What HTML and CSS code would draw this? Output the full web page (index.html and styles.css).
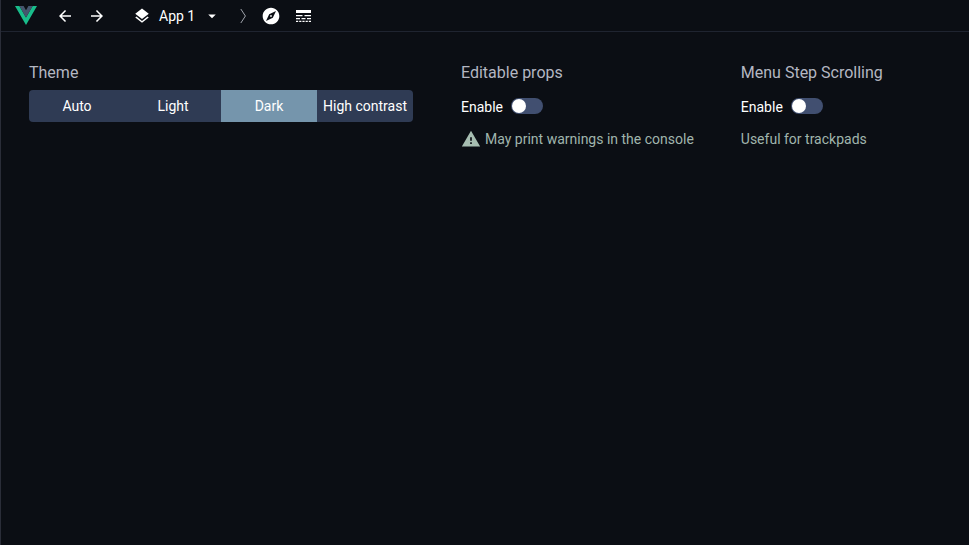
FILE: index.html
```html
<!DOCTYPE html>
<html lang="en">
<head>
<meta charset="utf-8">
<title>Vue Devtools settings</title>
<link rel="stylesheet" href="styles.css">
</head>
<body>
<div class="app">
  <header class="toolbar">
    <svg class="logo" viewBox="0 0 22 19" width="22" height="19"><path class="logo-outer" d="M0 0h4.4L11 11.4 17.6 0H22L11 19z"/><path class="logo-inner" d="M4.4 0h4.2L11 4.2 13.4 0h4.2L11 11.4z"/></svg>
    <div class="nav">
      <button class="icon-btn"><svg class="icon" viewBox="0 0 24 24"><path d="M20 11H7.83l5.59-5.59L12 4l-8 8 8 8 1.41-1.41L7.83 13H20z"/></svg></button>
      <button class="icon-btn"><svg class="icon" viewBox="0 0 24 24"><path d="M12 4l-1.41 1.41L16.17 11H4v2h12.17l-5.58 5.59L12 20l8-8z"/></svg></button>
    </div>
    <div class="app-select">
      <svg class="icon icon-layers" viewBox="0 0 24 24"><path d="M11.99 18.54l-7.37-5.73L3 14.07l9 7 9-7-1.63-1.27zM12 16l7.36-5.73L21 9l-9-7-9 7 1.63 1.27z"/></svg>
      <span class="app-name">App 1</span>
      <svg class="icon icon-drop" viewBox="0 0 24 24"><path d="M7 10l5 5 5-5z"/></svg>
    </div>
    <svg class="crumb" viewBox="0 0 8 16" width="8" height="16"><path d="M1.8 1l4.6 7-4.6 7" fill="none" stroke="#a0a4ac" stroke-width="1"/></svg>
    <button class="icon-btn tool"><svg class="icon icon-lg" viewBox="0 0 24 24"><path d="M12 10.9c-.61 0-1.1.49-1.1 1.1s.49 1.1 1.1 1.1 1.1-.49 1.1-1.1-.49-1.1-1.1-1.1zM12 2C6.48 2 2 6.48 2 12s4.48 10 10 10 10-4.48 10-10S17.52 2 12 2zm2.19 12.19L6 18l3.81-8.19L18 6l-3.81 8.19z"/></svg></button>
    <button class="icon-btn tool"><svg class="icon icon-table" viewBox="0 0 15 12"><path d="M0 0h15v3H0zM0 5h6.5v1.2H0zM8.5 5H15v1.2H8.5zM0 8h4v1.2H0zM5.5 8h4v1.2h-4zM11 8h4v1.2h-4zM0 10.8h2.2V12H0zM3.2 10.8h2.2V12H3.2zM6.4 10.8h2.2V12H6.4zM9.6 10.8h2.2V12H9.6zM12.8 10.8H15V12h-2.2z"/></svg></button>
  </header>
  <main class="settings">
    <section class="group">
      <h2 class="label">Theme</h2>
      <div class="segments">
        <button class="segment">Auto</button>
        <button class="segment">Light</button>
        <button class="segment active">Dark</button>
        <button class="segment">High contrast</button>
      </div>
    </section>
    <section class="group">
      <h2 class="label">Editable props</h2>
      <div class="toggle-row"><span class="toggle-text">Enable</span><span class="toggle"><span class="knob"></span></span></div>
      <p class="note note-warn"><svg class="warn" viewBox="0 0 24 24"><path d="M1 21h22L12 2 1 21zm12-3h-2v-2h2v2zm0-4h-2v-4h2v4z"/></svg>May print warnings in the console</p>
    </section>
    <section class="group">
      <h2 class="label">Menu Step Scrolling</h2>
      <div class="toggle-row"><span class="toggle-text">Enable</span><span class="toggle"><span class="knob"></span></span></div>
      <p class="note">Useful for trackpads</p>
    </section>
  </main>
</div>
</body>
</html>
```
FILE: styles.css
```css
* { box-sizing: border-box; }
html, body { margin: 0; height: 100%; }
body {
  background: #0b0e14;
  color: #fff;
  font-family: Roboto, "Liberation Sans", sans-serif;
  font-size: 14px;
}
.app {
  height: 545px;
  border-left: 1px solid #2a2d38;
  overflow: hidden;
}
.toolbar {
  height: 32px;
  display: flex;
  align-items: center;
  padding-left: 14px;
  border-bottom: 1px solid #1f2430;
}
.logo { flex: none; }
.logo-outer { fill: #19bd8b; }
.logo-inner { fill: #45566e; }
.nav { display: flex; margin-left: 12px; }
.icon-btn {
  width: 32px;
  height: 31px;
  padding: 0;
  border: 0;
  background: none;
  display: flex;
  align-items: center;
  justify-content: center;
}
.icon { width: 18px; height: 18px; fill: #fff; display: block; }
.icon-lg { width: 20px; height: 20px; }
.icon-table { width: 15px; height: 12px; }
.app-select { display: flex; align-items: center; margin-left: 20px; }
.icon-layers { width: 18px; height: 18px; }
.app-name { margin-left: 8px; font-size: 14px; }
.icon-drop { width: 18px; height: 18px; margin-left: 8px; }
.crumb { margin-left: 18px; flex: none; }
.tool:first-of-type { margin-left: 8px; }
.settings { display: flex; gap: 48px; padding: 31px 28px 0; }
.label {
  margin: 0;
  font-size: 16px;
  font-weight: 400;
  line-height: 19px;
  color: #b4b7c2;
}
.segments {
  display: flex;
  margin-top: 8px;
  border-radius: 4px;
  overflow: hidden;
  background: #2f3b54;
}
.segment {
  width: 96px;
  height: 32px;
  padding: 0;
  border: 0;
  background: none;
  color: #fff;
  font: 14px Roboto, "Liberation Sans", sans-serif;
}
.segment.active { background: #7595ac; }
.toggle-row {
  display: flex;
  align-items: center;
  gap: 8px;
  margin-top: 8px;
  height: 32px;
}
.toggle-text { padding-top: 2px; }
.toggle {
  width: 32px;
  height: 16px;
  border-radius: 8px;
  background: #414f70;
  display: flex;
  align-items: center;
}
.knob { width: 14px; height: 14px; border-radius: 50%; background: #fff; margin-left: 1px; }
.note {
  margin: 9px 0 0;
  height: 16px;
  line-height: 16px;
  color: #a0b5ad;
  display: flex;
  align-items: center;
}
.note-warn { margin-right: -1px; }
.warn { width: 20px; height: 20px; fill: #a6bdb1; margin: -2px 4px -2px 0; flex: none; }
```
